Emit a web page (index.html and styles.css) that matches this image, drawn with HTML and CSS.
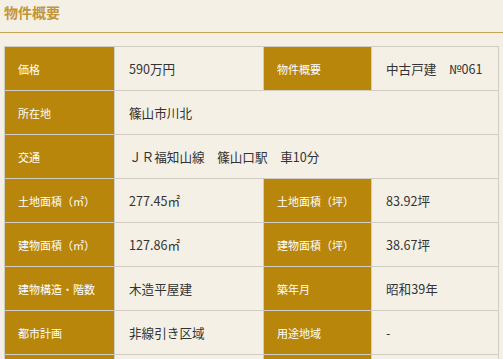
FILE: index.html
```html
<!DOCTYPE html>
<html lang="ja">
<head>
<meta charset="utf-8">
<title>物件概要</title>
<link rel="stylesheet" href="styles.css">
</head>
<body>
<div class="page">
  <h2 class="title">物件概要</h2>
  <div class="spec">
    <div class="lbl">価格</div>
    <div class="val">590万円</div>
    <div class="lbl">物件概要</div>
    <div class="val">中古戸建　№061</div>

    <div class="lbl">所在地</div>
    <div class="val wide">篠山市川北</div>

    <div class="lbl">交通</div>
    <div class="val wide">ＪＲ福知山線　篠山口駅　車10分</div>

    <div class="lbl">土地面積（㎡）</div>
    <div class="val">277.45㎡</div>
    <div class="lbl">土地面積（坪）</div>
    <div class="val">83.92坪</div>

    <div class="lbl">建物面積（㎡）</div>
    <div class="val">127.86㎡</div>
    <div class="lbl">建物面積（坪）</div>
    <div class="val">38.67坪</div>

    <div class="lbl">建物構造・階数</div>
    <div class="val">木造平屋建</div>
    <div class="lbl">築年月</div>
    <div class="val">昭和39年</div>

    <div class="lbl">都市計画</div>
    <div class="val">非線引き区域</div>
    <div class="lbl">用途地域</div>
    <div class="val">-</div>

    <div class="lbl"></div>
    <div class="val"></div>
    <div class="lbl"></div>
    <div class="val"></div>
  </div>
</div>
</body>
</html>
```

FILE: styles.css
```css
html, body {
  margin: 0;
  padding: 0;
  background: #f4f0e6;
}
body {
  font-family: "Noto Sans CJK JP", "Noto Sans", sans-serif;
  color: #333333;
}
.page {
  padding: 0 0 20px 0;
}
.title {
  margin: 0;
  padding: 0 0 8px 4px;
  height: 24px;
  line-height: 24px;
  font-size: 14px;
  font-weight: bold;
  color: #c3953a;
  border-bottom: 1px solid #c8a458;
}
.spec {
  margin: 13px 4px 0 4px;
  display: grid;
  grid-template-columns: 109px 148px 107px 126px;
  grid-auto-rows: 43px;
  gap: 1px;
  background: #d2cdc2;
  border: 1px solid #d2cdc2;
}
.lbl {
  background: #b8860b;
  color: #ffffff;
  font-size: 11px;
  padding: 0 13px;
  display: flex;
  align-items: center;
  white-space: nowrap;
}
.val {
  background: #f4f0e6;
  color: #333333;
  font-size: 12.6px;
  padding: 0 14px;
  display: flex;
  align-items: center;
  white-space: nowrap;
}
.wide {
  grid-column: span 3;
}
```
